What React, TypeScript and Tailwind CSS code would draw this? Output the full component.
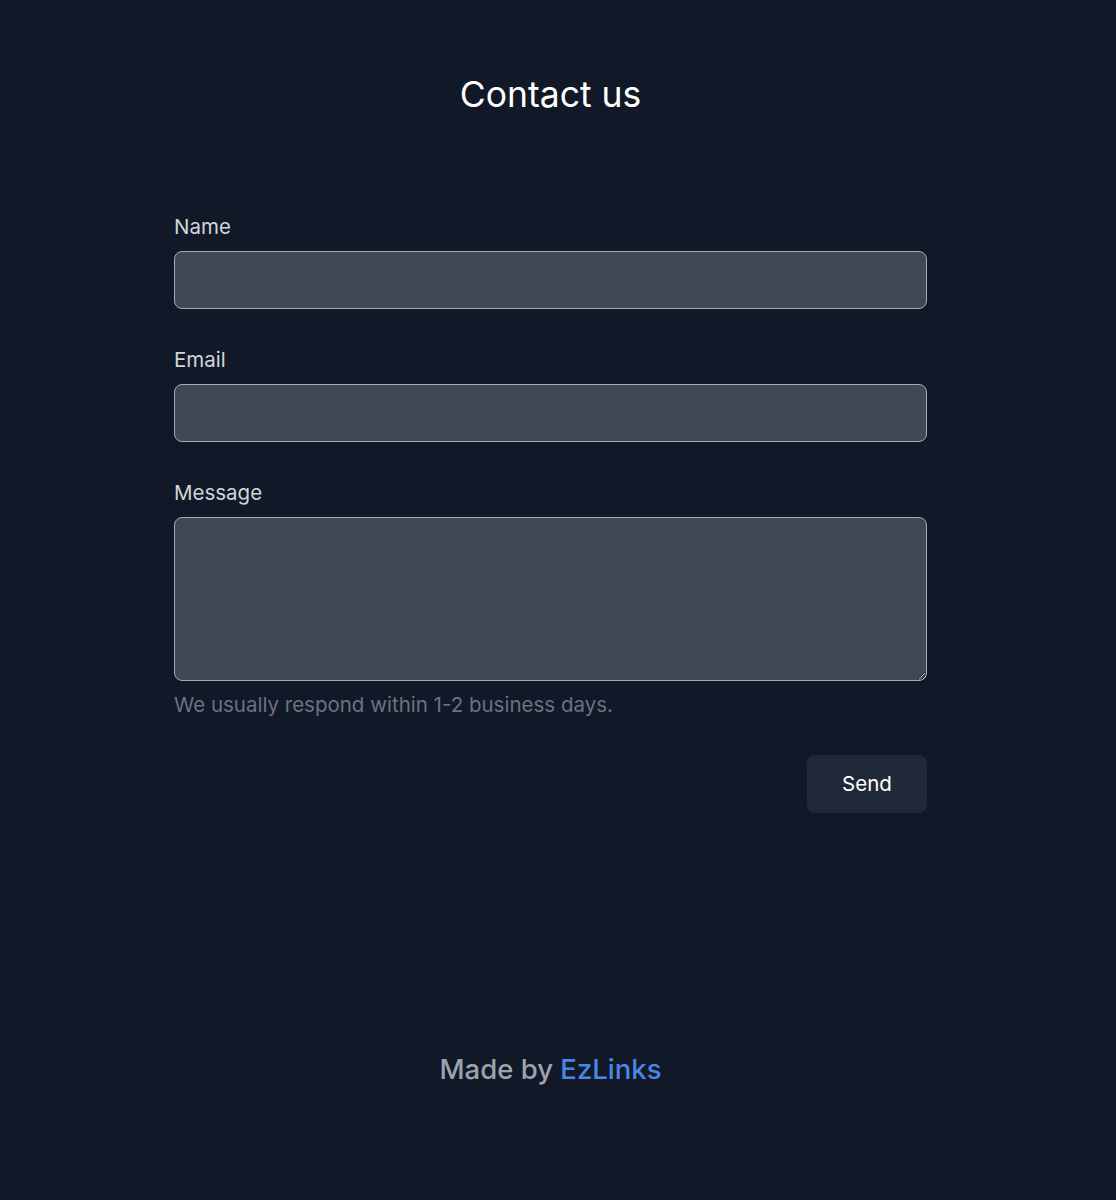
import React from "react";

const App: React.FC = () => {
  return (
    <div
      className="min-h-[1200px] bg-[#111827] pr-[15px] flex flex-col"
      style={{ fontFamily: "Inter, 'Noto Sans', sans-serif" }}
    >
      {/* Title */}
      <h1 className="mt-[75px] text-center text-[35.5px] leading-[40px] text-white font-normal">
        Contact us
      </h1>

      {/* Form */}
      <form className="mx-auto mt-[98px] w-[753px] flex flex-col">
        <label className="text-[20.5px] leading-[28px] text-[#d1d5db]">Name</label>
        <input
          type="text"
          className="mt-[10px] h-[58px] w-full rounded-lg border border-[#a3a9b5] bg-[#414753] px-4 text-white outline-none"
        />

        <label className="mt-[37px] text-[20.5px] leading-[28px] text-[#d1d5db]">Email</label>
        <input
          type="email"
          className="mt-[10px] h-[58px] w-full rounded-lg border border-[#a3a9b5] bg-[#414753] px-4 text-white outline-none"
        />

        <label className="mt-[37px] text-[20.5px] leading-[28px] text-[#d1d5db]">Message</label>
        <textarea
          className="mt-[10px] h-[164px] w-full rounded-lg border border-[#a3a9b5] bg-[#414753] px-4 py-2 text-white outline-none block"
        />
        <p className="mt-[10px] text-[20.5px] leading-[28px] text-[#6b7280]">
          We usually respond within 1-2 business days.
        </p>

        <div className="mt-[36px] flex justify-end">
          <button
            type="button"
            className="h-[58px] w-[120px] rounded-lg bg-[#1f2937] text-[20.5px] text-white"
          >
            Send
          </button>
        </div>
      </form>

      {/* Footer */}
      <footer className="mt-[240px] text-center text-[27.5px] leading-[32px] font-medium text-[#9ca3af]">
        Made by <span className="text-[#4a86e6]">EzLinks</span>
      </footer>
    </div>
  );
};

export default App;
